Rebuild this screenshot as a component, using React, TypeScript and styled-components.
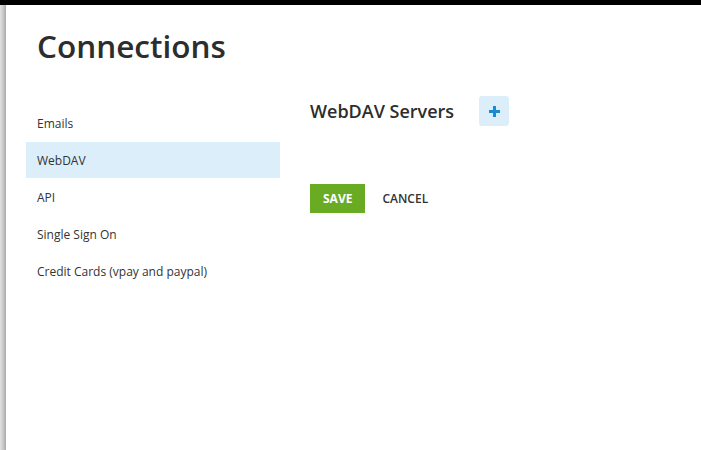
import React from "react";
import styled, { createGlobalStyle } from "styled-components";

const Global = createGlobalStyle`
  html, body { margin: 0; padding: 0; background: #fff; }
  body { font-family: "Open Sans", "Liberation Sans", sans-serif; color: #333; }
  * { box-sizing: border-box; }
`;

const Page = styled.div`
  width: 701px;
  height: 450px;
  display: flex;
  flex-direction: column;
  overflow: hidden;
`;

const TopBar = styled.div`
  height: 5px;
  background: #000;
  flex: none;
`;

const Body = styled.div`
  flex: 1;
  display: flex;
`;

const Gutter = styled.div`
  width: 6px;
  flex: none;
  background: linear-gradient(to right, #e2e2e2, #c4c4c4 60%, #a8a8a8);
`;

const Main = styled.div`
  flex: 1;
  padding: 22px 0 0 20px;
`;

const Title = styled.h1`
  margin: 0 0 0 11px;
  font-size: 31.5px;
  font-weight: 600;
  line-height: 38px;
  color: #2d2d2d;
`;

const Columns = styled.div`
  display: flex;
  margin-top: 40px;
`;

const Nav = styled.nav`
  width: 254px;
  display: flex;
  flex-direction: column;
  gap: 1px;
`;

const NavItem = styled.div<{ $active?: boolean }>`
  height: 36px;
  padding: 0 11px;
  display: flex;
  align-items: center;
  font-size: 12px;
  color: #333;
  background: ${(p) => (p.$active ? "#dbeef9" : "transparent")};
`;

const Content = styled.section`
  margin-left: 30px;
`;

const HeaderRow = styled.div`
  display: flex;
  align-items: center;
  margin-top: -9px;
  height: 30px;
`;

const SectionTitle = styled.h2`
  margin: 0;
  font-size: 18px;
  font-weight: 600;
  color: #2d2d2d;
  width: 169px;
`;

const AddButton = styled.button`
  width: 30px;
  height: 30px;
  border: none;
  border-radius: 3px;
  background: #dbeef9;
  display: flex;
  align-items: center;
  justify-content: center;
  padding: 0;
  cursor: pointer;
`;

const Actions = styled.div`
  display: flex;
  align-items: center;
  gap: 17px;
  margin-top: 58px;
`;

const SaveButton = styled.button`
  height: 29px;
  padding: 0 13px;
  border: none;
  background: #6aab24;
  color: #fff;
  font-family: inherit;
  font-size: 12px;
  font-weight: 700;
  cursor: pointer;
`;

const CancelButton = styled.button`
  height: 29px;
  padding: 0;
  border: none;
  background: transparent;
  color: #333;
  font-family: inherit;
  font-size: 12px;
  font-weight: 600;
  cursor: pointer;
`;

const items = ["Emails", "WebDAV", "API", "Single Sign On", "Credit Cards (vpay and paypal)"];

export default function App() {
  return (
    <Page>
      <Global />
      <TopBar />
      <Body>
        <Gutter />
        <Main>
          <Title>Connections</Title>
          <Columns>
            <Nav>
              {items.map((t) => (
                <NavItem key={t} $active={t === "WebDAV"}>
                  {t}
                </NavItem>
              ))}
            </Nav>
            <Content>
              <HeaderRow>
                <SectionTitle>WebDAV Servers</SectionTitle>
                <AddButton aria-label="Add">
                  <svg width="11" height="11" viewBox="0 0 11 11">
                    <path d="M4 0h3v4h4v3H7v4H4V7H0V4h4z" fill="#1a8ad4" />
                  </svg>
                </AddButton>
              </HeaderRow>
              <Actions>
                <SaveButton>SAVE</SaveButton>
                <CancelButton>CANCEL</CancelButton>
              </Actions>
            </Content>
          </Columns>
        </Main>
      </Body>
    </Page>
  );
}
